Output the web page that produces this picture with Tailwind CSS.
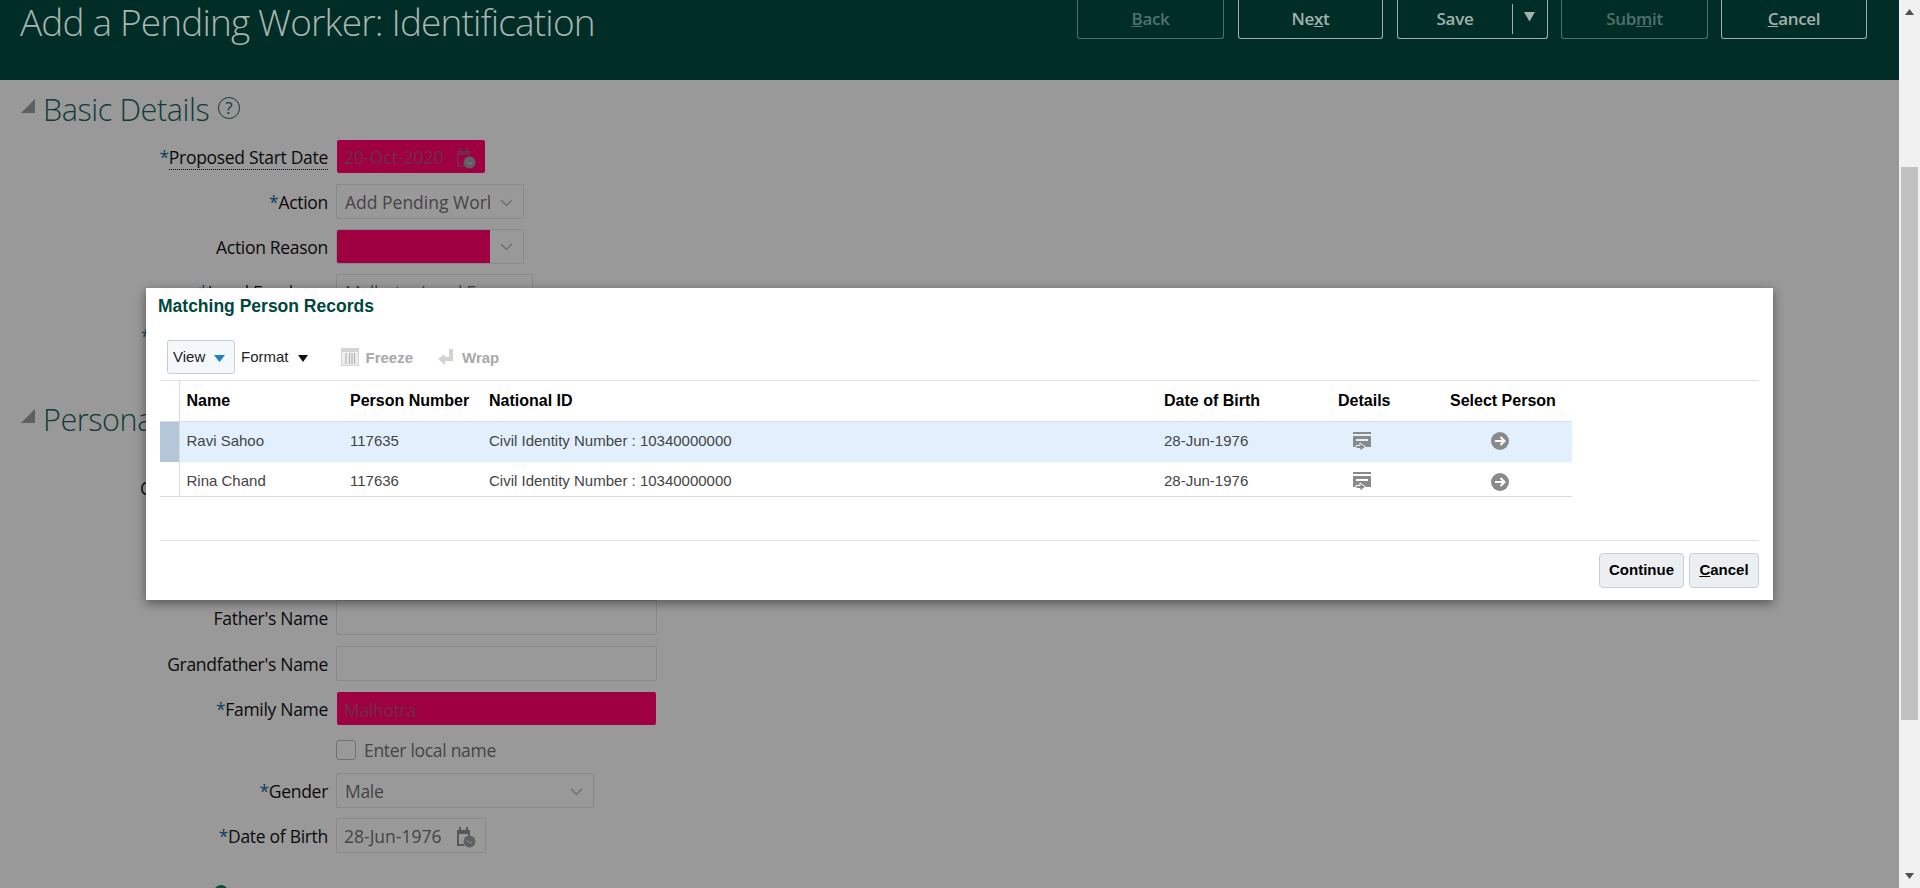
<!DOCTYPE html>
<html lang="en">
<head>
  <meta charset="UTF-8">
  <title>Add a Pending Worker: Identification</title>
  <script src="https://cdn.jsdelivr.net/npm/@tailwindcss/browser@4"></script>
</head>
<body class="bg-[#999999] overflow-hidden font-['Open_Sans',sans-serif]">
<div class="flex h-[888px] w-[1920px]">
  <!-- page behind the dialog -->
  <div class="relative w-[1899px] h-[888px] overflow-hidden">
    <header class="h-[80px] bg-[#002e27] flex justify-between pl-[20px] pr-[32px]">
      <h1 class="text-[37px] leading-[44px] font-light text-[#a9b5b1] tracking-[-0.85px]">Add a Pending Worker: Identification</h1>
      <div class="flex gap-[13px] h-[39px] text-[17px] font-semibold tracking-[-0.3px]">
        <button class="w-[147px] border border-t-0 border-[#52706a] rounded-b-[3px] text-[#52706a]"><u>B</u>ack</button>
        <button class="ml-[1px] w-[145px] border border-t-0 border-[#a3b0ac] rounded-b-[3px] text-[#a3b0ac]">Ne<u>x</u>t</button>
        <div class="ml-[1px] w-[151px] flex border border-t-0 border-[#a3b0ac] rounded-b-[3px] text-[#a3b0ac]">
          <button class="w-[115px] h-[30px] mt-[4px] border-r border-[#a3b0ac]">Save</button>
          <svg class="ml-[10px] mt-[12px]" width="13" height="10" viewBox="0 0 13 10"><path d="M1 0h11L6.500 9.500z" fill="#a3b0ac"/></svg>
        </div>
        <button class="w-[147px] border border-t-0 border-[#52706a] rounded-b-[3px] text-[#52706a]">Sub<u>m</u>it</button>
        <button class="w-[146px] border border-t-0 border-[#a3b0ac] rounded-b-[3px] text-[#a3b0ac]"><u>C</u>ancel</button>
      </div>
    </header>

    <!-- Basic Details -->
    <div class="h-[54px] flex items-start pl-[21px] pt-[9px]">
      <svg class="mt-[10px]" width="14" height="14" viewBox="0 0 14 14"><path d="M14 0v14H0z" fill="#5c6063"/></svg>
      <h2 class="ml-[8px] w-[167px] text-[30.500px] leading-[40px] font-light text-[#123b38] tracking-[-0.4px]">Basic Details</h2>
      <span class="ml-[8px] mt-[8px] w-[22px] h-[22px] rounded-full border border-[#123b38] text-[#123b38] text-[17px] leading-[20px] text-center">?</span>
    </div>

    <div class="flex items-center h-[45px]">
      <label class="w-[328px] pt-[1px] text-right text-[17.500px] text-[#0a0a0a] tracking-[-0.3px]"><span class="text-[#0d3f66]">*</span><span class="border-b border-dotted border-[#111]">Proposed Start Date</span></label>
      <div class="ml-[9px] w-[148px] h-[33px] bg-[#9e0041] rounded-[2px] flex items-center justify-between pl-[7px] pr-[9px] pt-[2px] text-[17.500px] text-[#6e2e4a]">
        20-Oct-2020
        <svg width="21" height="22" viewBox="0 0 21 22"><path d="M2 4h2V1h2v3h5V1h2v3h2v8h-2V8H4v10h5v2H2z" fill="#73274a"/><circle cx="14.500" cy="15.500" r="6" fill="#5f6066"/><path d="M11.500 14.500l3 2h2.500" stroke="#8a8a8a" fill="none"/></svg>
      </div>
    </div>
    <div class="flex items-center h-[45px]">
      <label class="w-[328px] pt-[1px] text-right text-[17.500px] text-[#0a0a0a] tracking-[-0.3px]"><span class="text-[#0d3f66]">*</span>Action</label>
      <div class="ml-[8px] w-[188px] h-[35px] border border-[#858a8a] rounded-[2px] flex items-center pl-[8px] pt-[2px] text-[17.500px] text-[#444]">
        <span class="w-[145px] overflow-hidden whitespace-nowrap">Add Pending Worker</span>
        <svg class="ml-[10px]" width="13" height="8" viewBox="0 0 13 8"><path d="M1 1l5.500 5.500L12 1" stroke="#6f7272" stroke-width="1.500" fill="none"/></svg>
      </div>
    </div>
    <div class="flex items-center h-[45px]">
      <label class="w-[328px] pt-[1px] text-right text-[17.500px] text-[#0a0a0a] tracking-[-0.3px]">Action Reason</label>
      <div class="ml-[8px] w-[188px] h-[35px] border border-[#858a8a] rounded-[2px] flex items-center">
        <div class="w-[153px] h-[33px] bg-[#9e0041] rounded-l-[2px]"></div>
        <svg class="ml-[10px]" width="13" height="8" viewBox="0 0 13 8"><path d="M1 1l5.500 5.500L12 1" stroke="#6f7272" stroke-width="1.500" fill="none"/></svg>
      </div>
    </div>
    <div class="flex items-center h-[45px]">
      <label class="w-[328px] pt-[1px] text-right text-[17.500px] text-[#0a0a0a] tracking-[-0.3px]"><span class="text-[#0d3f66]">*</span>Legal Employer</label>
      <div class="ml-[8px] w-[197px] h-[35px] border border-[#858a8a] rounded-[2px] flex items-center pl-[8px] pt-[2px] text-[17.500px] text-[#444] tracking-[-0.3px]">Malhotra Legal E</div>
    </div>
    <div class="flex items-center h-[45px]">
      <label class="ml-[141px] text-[17.500px] text-[#0d3f66]">*</label>
    </div>

    <!-- Personal Details -->
    <div class="mt-[31px] h-[54px] flex items-start pl-[21px] pt-[9px]">
      <svg class="mt-[10px]" width="14" height="14" viewBox="0 0 14 14"><path d="M14 0v14H0z" fill="#5c6063"/></svg>
      <h2 class="ml-[8px] text-[30.500px] leading-[40px] font-light text-[#123b38] tracking-[-0.4px]">Personal Details</h2>
    </div>
    <div class="mt-[22px] flex items-center h-[45px]">
      <label class="ml-[140px] text-[17.500px] text-[#0a0a0a]">C</label>
    </div>

    <div class="mt-[84px] flex items-center h-[45px]">
      <label class="w-[328px] pt-[1px] text-right text-[17.500px] text-[#0a0a0a] tracking-[-0.3px]">Father's Name</label>
      <div class="ml-[8px] w-[321px] h-[35px] border border-[#858a8a] rounded-[2px]"></div>
    </div>
    <div class="mt-[1px] flex items-center h-[45px]">
      <label class="w-[328px] pt-[1px] text-right text-[17.500px] text-[#0a0a0a] tracking-[-0.3px]">Grandfather's Name</label>
      <div class="ml-[8px] w-[321px] h-[35px] border border-[#858a8a] rounded-[2px]"></div>
    </div>
    <div class="flex items-center h-[45px]">
      <label class="w-[328px] pt-[1px] text-right text-[17.500px] text-[#0a0a0a] tracking-[-0.3px]"><span class="text-[#0d3f66]">*</span>Family Name</label>
      <div class="ml-[9px] w-[319px] h-[33px] bg-[#9e0041] rounded-[2px] flex items-center pl-[7px] pt-[3px] text-[17.500px] text-[#6e2e4a] tracking-[-0.3px]">Malhotra</div>
    </div>
    <div class="flex items-center h-[38px] pl-[336px]">
      <span class="w-[20px] h-[20px] border border-[#6f7272] rounded-[3px]"></span>
      <span class="ml-[8px] text-[17.500px] text-[#444] tracking-[-0.3px]">Enter local name</span>
    </div>
    <div class="flex items-center h-[43px]">
      <label class="w-[328px] pt-[1px] text-right text-[17.500px] text-[#0a0a0a] tracking-[-0.3px]"><span class="text-[#0d3f66]">*</span>Gender</label>
      <div class="ml-[8px] w-[258px] h-[35px] border border-[#858a8a] rounded-[2px] flex items-center justify-between pl-[8px] pr-[10px] pt-[2px] text-[17.500px] text-[#444] tracking-[-0.3px]">
        Male
        <svg width="13" height="8" viewBox="0 0 13 8"><path d="M1 1l5.500 5.500L12 1" stroke="#6f7272" stroke-width="1.500" fill="none"/></svg>
      </div>
    </div>
    <div class="flex items-center h-[45px] mt-[1px]">
      <label class="w-[328px] pt-[1px] text-right text-[17.500px] text-[#0a0a0a] tracking-[-0.3px]"><span class="text-[#0d3f66]">*</span>Date of Birth</label>
      <div class="ml-[8px] w-[150px] h-[35px] border border-[#858a8a] rounded-[2px] flex items-center justify-between pl-[7px] pr-[9px] pt-[2px] text-[17.500px] text-[#444]">
        28-Jun-1976
        <svg width="21" height="22" viewBox="0 0 21 22"><path d="M2 4h2V1h2v3h5V1h2v3h2v8h-2V8H4v10h5v2H2z" fill="#55595a"/><circle cx="14.500" cy="15.500" r="6" fill="#5f6066"/><path d="M11.500 14.500l3 2h2.500" stroke="#8a8a8a" fill="none"/></svg>
      </div>
    </div>
    <div class="mt-[27px] ml-[214px] w-[14px] h-[14px] rounded-full bg-[#0f4a40]"></div>

    <!-- Matching Person Records dialog -->
    <div class="absolute left-[146px] top-[288px] w-[1627px] h-[312px] bg-white shadow-[0_3px_10px_rgba(0,0,0,0.45)] pl-[12px] pr-[14px] font-['Liberation_Sans',Arial,sans-serif]">
      <h3 class="pt-[8px] h-[52px] text-[17.500px] leading-[20px] font-bold text-[#00473d]">Matching Person Records</h3>
      <div class="ml-[2px]">
        <div class="flex items-center h-[34px] ml-[7px] text-[15px]">
          <button class="w-[68px] h-[34px] bg-[#f5f8fb] border border-[#c4ced7] rounded-[3px] flex items-center pl-[5px] text-[#222]">
            View
            <svg class="ml-[9px] mt-[2px]" width="11" height="7" viewBox="0 0 11 7"><path d="M0 0h11L5.500 7z" fill="#1b7fd0"/></svg>
          </button>
          <span class="ml-[6px] text-[#222]">Format</span>
          <svg class="ml-[9px] mt-[2px]" width="10" height="7" viewBox="0 0 10 7"><path d="M0 0h10L5 7z" fill="#111"/></svg>
          <svg class="ml-[33px]" width="18" height="18" viewBox="0 0 18 18"><rect x=".5" y=".5" width="17" height="17" fill="#eeeeee" stroke="#d4d4d4"/><rect x="1" y="1" width="16" height="3" fill="#d4d4d4"/><path d="M5 5v11M8.500 5v11M11 5v11M13.500 5v11" stroke="#b5b5b5" stroke-width="1.200"/></svg>
          <span class="ml-[7px] pt-[2px] font-bold text-[#a8a8a8]">Freeze</span>
          <svg class="ml-[25px]" width="16" height="18" viewBox="0 0 16 18"><path d="M11 1h4v12H7v4L0 11l7-5v3h4z" fill="#d2d2d2"/></svg>
          <span class="ml-[8px] pt-[2px] font-bold text-[#a8a8a8]">Wrap</span>
        </div>
        <div class="mt-[6px] border-t border-[#dfe3e7]">
          <table class="table-fixed w-[1412px] text-[15px] text-left border-collapse">
            <colgroup><col class="w-[19px]"><col class="w-[164px]"><col class="w-[139px]"><col class="w-[675px]"><col class="w-[174px]"><col class="w-[112px]"><col class="w-[129px]"></colgroup>
            <thead>
              <tr class="h-[40px] border-b border-[#d6e0e8] text-black text-[16px] font-bold">
                <th class="border-r border-[#d6dce2]"></th>
                <th class="pl-[7px]">Name</th>
                <th class="pl-[7px]">Person Number</th>
                <th class="pl-[7px]">National ID</th>
                <th class="pl-[7px]">Date of Birth</th>
                <th class="pl-[7px]">Details</th>
                <th class="pl-[7px]">Select Person</th>
              </tr>
            </thead>
            <tbody class="text-[#444]">
              <tr class="h-[41px] bg-[#e2f0fd]">
                <td class="bg-[#b3c7d8] border-r border-[#d6dce2]"></td>
                <td class="pl-[7px] pb-[2px]">Ravi Sahoo</td>
                <td class="pl-[7px] pb-[2px]">117635</td>
                <td class="pl-[7px] pb-[2px]">Civil Identity Number : 10340000000</td>
                <td class="pl-[7px] pb-[2px]">28-Jun-1976</td>
                <td class="pl-[22px] text-[#e2f0fd]"><svg class="block" width="18" height="19" viewBox="0 0 18 19"><path d="M0 0h18v2H0zM0 4h18v11H0zM3 7v2h12V7z" fill="#8a8a8a" fill-rule="evenodd"/><path d="M3 13.500h4V11l5.500 4L7 19v-2.500H3z" fill="#8a8a8a" stroke="currentColor"/></svg></td>
                <td class="pl-[48px] pb-[2px]"><svg class="block" width="18" height="18" viewBox="0 0 18 18"><circle cx="9" cy="9" r="9" fill="#8a8a8a"/><path d="M4 9h9M9.500 5l4 4-4 4" stroke="#fff" stroke-width="2" fill="none"/></svg></td>
              </tr>
              <tr class="h-[34px] border-b border-[#d6dce2]">
                <td class="border-r border-[#d6dce2]"></td>
                <td class="pl-[7px] pt-[5px]">Rina Chand</td>
                <td class="pl-[7px] pt-[5px]">117636</td>
                <td class="pl-[7px] pt-[5px]">Civil Identity Number : 10340000000</td>
                <td class="pl-[7px] pt-[5px]">28-Jun-1976</td>
                <td class="pl-[22px] pt-[6px] text-white"><svg class="block" width="18" height="19" viewBox="0 0 18 19"><path d="M0 0h18v2H0zM0 4h18v11H0zM3 7v2h12V7z" fill="#8a8a8a" fill-rule="evenodd"/><path d="M3 13.500h4V11l5.500 4L7 19v-2.500H3z" fill="#8a8a8a" stroke="currentColor"/></svg></td>
                <td class="pl-[48px] pt-[6px]"><svg class="block" width="18" height="18" viewBox="0 0 18 18"><circle cx="9" cy="9" r="9" fill="#8a8a8a"/><path d="M4 9h9M9.500 5l4 4-4 4" stroke="#fff" stroke-width="2" fill="none"/></svg></td>
              </tr>
            </tbody>
          </table>
        </div>
        <div class="mt-[43px] border-t border-[#dfe3e7] pt-[12px] flex justify-end gap-[5px] text-[15px] font-bold text-black">
          <button class="w-[85px] h-[35px] bg-[#eceff2] border border-[#c4ced7] rounded-[4px]">Continue</button>
          <button class="w-[70px] h-[35px] bg-[#eceff2] border border-[#c4ced7] rounded-[4px]"><u>C</u>ancel</button>
        </div>
      </div>
    </div>
  </div>

  <!-- scrollbar -->
  <div class="relative w-[21px] h-[888px] bg-[#f1f1f1]">
    <svg class="absolute left-[6px] top-[9px]" width="9" height="6" viewBox="0 0 9 6"><path d="M4.500 0L9 6H0z" fill="#505050"/></svg>
    <div class="absolute left-[2px] top-[167px] w-[17px] h-[553px] bg-[#c1c1c1]"></div>
    <svg class="absolute left-[6px] top-[873px]" width="9" height="6" viewBox="0 0 9 6"><path d="M0 0h9L4.500 6z" fill="#505050"/></svg>
  </div>
</div>
</body>
</html>
